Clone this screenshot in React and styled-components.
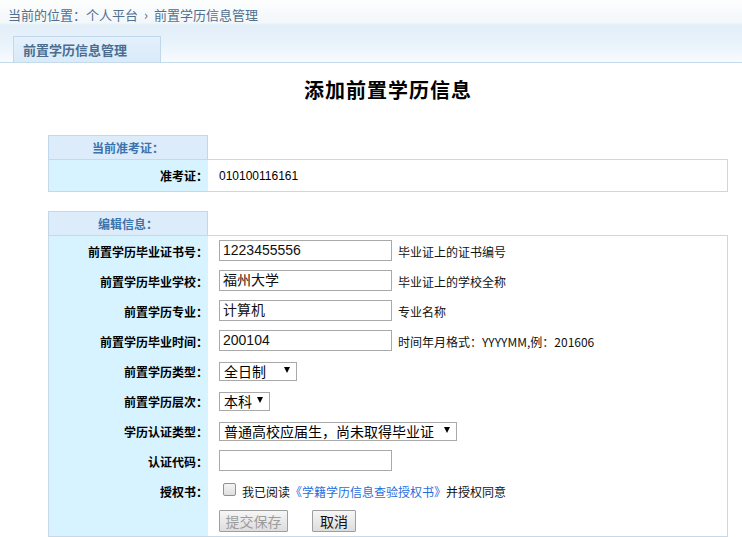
import React from "react";
import styled, { createGlobalStyle } from "styled-components";

const Global = createGlobalStyle`
  html, body { margin: 0; padding: 0; background: #fff; }
  body { font-family: "Noto Sans CJK SC", "Liberation Sans", sans-serif; font-size: 12px; color: #000; }
`;

const Header = styled.div`
  height: 62px;
  border-bottom: 1px solid #c5dbec;
  background: linear-gradient(#fdfefe 0px, #f2f7fa 23px, #e2eef8 25px, #e8f2fb 42px, #f7fbfe 62px);
  display: flex;
  flex-direction: column;
`;

const Crumb = styled.div`
  height: 30px;
  line-height: 30px;
  padding-left: 8px;
  font-size: 13px;
  color: #50708f;
  display: flex;
  gap: 6px;
`;

const Tab = styled.div`
  margin: 6px 0 0 13px;
  width: 137px;
  height: 25px;
  padding-left: 9px;
  border: 1px solid #c0d8ec;
  border-bottom: none;
  background: linear-gradient(#e4f0fc, #d9eaf9);
  color: #4b6d90;
  font-weight: bold;
  font-size: 13px;
  line-height: 26px;
`;

const Title = styled.h1`
  margin: 0;
  height: 72px;
  line-height: 54px;
  text-align: center;
  font-size: 20px;
  font-weight: bold;
  letter-spacing: 1px;
  padding-left: 34px;
`;

const Section = styled.div`
  margin: 0 0 19px 48px;
  width: 680px;
`;

const SectionHead = styled.div`
  width: 158px;
  height: 23px;
  line-height: 23px;
  border: 1px solid #c3d7ea;
  border-bottom: none;
  background: #dcecfb;
  color: #3a73ad;
  font-weight: bold;
  font-size: 12px;
  text-align: center;
`;

const Table = styled.div`
  display: grid;
  grid-template-columns: 159px 1fr;
  border: 1px solid #c8d8e6;
`;

const Label = styled.div`
  background: #d7f3ff;
  height: ${(p) => p.$h || 30}px;
  display: flex;
  align-items: center;
  justify-content: flex-end;
  padding-right: 0;
  font-weight: bold;
  font-size: 12px;
  white-space: nowrap;
`;

const Value = styled.div`
  height: ${(p) => p.$h || 30}px;
  display: flex;
  align-items: center;
  padding-left: 11px;
  gap: 6px;
  font-size: ${(p) => p.$fs || 12}px;
  font-family: ${(p) => (p.$mono ? '"Liberation Sans", sans-serif' : "inherit")};
`;

const Input = styled.div`
  box-sizing: border-box;
  width: 173px;
  height: 21px;
  margin-top: -1px;
  border: 1px solid #a9a9a9;
  padding: 0 3px;
  line-height: 19px;
  font-size: 14px;
  font-family: "Liberation Sans", "Noto Sans CJK SC", sans-serif;
  color: #111;
`;

const Hint = styled.span`
  font-size: 12px;
  color: #111;
`;

const Select = styled.div`
  box-sizing: border-box;
  width: ${(p) => p.$w}px;
  height: 19px;
  border: 1px solid #a9a9a9;
  display: flex;
  align-items: center;
  justify-content: space-between;
  padding: 0 6px 0 4px;
  font-size: 14px;
  background: #fff;
`;

const Arrow = styled.span`
  width: 0;
  height: 0;
  border-left: 3px solid transparent;
  border-right: 3px solid transparent;
  border-top: 6px solid #000;
  margin-top: -3px;
`;

const Check = styled.span`
  box-sizing: border-box;
  width: 13px;
  height: 13px;
  margin: -4px 0 0 4px;
  border: 1px solid #8f8f9d;
  border-radius: 2px;
  background: linear-gradient(#f4f4f4, #dedede);
`;

const Link = styled.span`
  color: #1f6fe0;
`;

const Buttons = styled.div`
  display: flex;
  gap: 24px;
`;

const Button = styled.button`
  box-sizing: border-box;
  height: 22px;
  width: ${(p) => p.$w}px;
  padding: 0;
  border: 1px solid #9e9e9e;
  border-radius: 1px;
  background: linear-gradient(#f6f6f6, #dddddd);
  font-family: "Noto Sans CJK SC", sans-serif;
  font-size: 14px;
  line-height: 20px;
  color: ${(p) => (p.disabled ? "#9c9c9c" : "#111")};
`;

const rows = [
  { label: "前置学历毕业证书号：", value: "1223455556", hint: "毕业证上的证书编号" },
  { label: "前置学历毕业学校：", value: "福州大学", hint: "毕业证上的学校全称" },
  { label: "前置学历专业：", value: "计算机", hint: "专业名称" },
  { label: "前置学历毕业时间：", value: "200104", hint: "时间年月格式：YYYYMM,例：201606" },
];

const selects = [
  { label: "前置学历类型：", value: "全日制", w: 78 },
  { label: "前置学历层次：", value: "本科", w: 51 },
  { label: "学历认证类型：", value: "普通高校应届生，尚未取得毕业证", w: 238 },
];

export default function App() {
  return (
    <>
      <Global />
      <Header>
        <Crumb>
          <span>当前的位置：个人平台</span>
          <span>›</span>
          <span>前置学历信息管理</span>
        </Crumb>
        <Tab>前置学历信息管理</Tab>
      </Header>
      <Title>添加前置学历信息</Title>

      <Section>
        <SectionHead>当前准考证：</SectionHead>
        <Table>
          <Label $h={31}>准考证：</Label>
          <Value $h={31} $mono $fs={12}>010100116161</Value>
        </Table>
      </Section>

      <Section>
        <SectionHead>编辑信息：</SectionHead>
        <Table>
          {rows.map((r) => (
            <React.Fragment key={r.label}>
              <Label>{r.label}</Label>
              <Value>
                <Input>{r.value}</Input>
                <Hint>{r.hint}</Hint>
              </Value>
            </React.Fragment>
          ))}
          {selects.map((s) => (
            <React.Fragment key={s.label}>
              <Label>{s.label}</Label>
              <Value>
                <Select $w={s.w}>
                  <span>{s.value}</span>
                  <Arrow />
                </Select>
              </Value>
            </React.Fragment>
          ))}
          <Label>认证代码：</Label>
          <Value>
            <Input />
          </Value>
          <Label>授权书：</Label>
          <Value>
            <Check />
            <Hint>
              我已阅读<Link>《学籍学历信息查验授权书》</Link>并授权同意
            </Hint>
          </Value>
          <Label />
          <Value>
            <Buttons>
              <Button $w={69} disabled>提交保存</Button>
              <Button $w={44}>取消</Button>
            </Buttons>
          </Value>
        </Table>
      </Section>
    </>
  );
}
